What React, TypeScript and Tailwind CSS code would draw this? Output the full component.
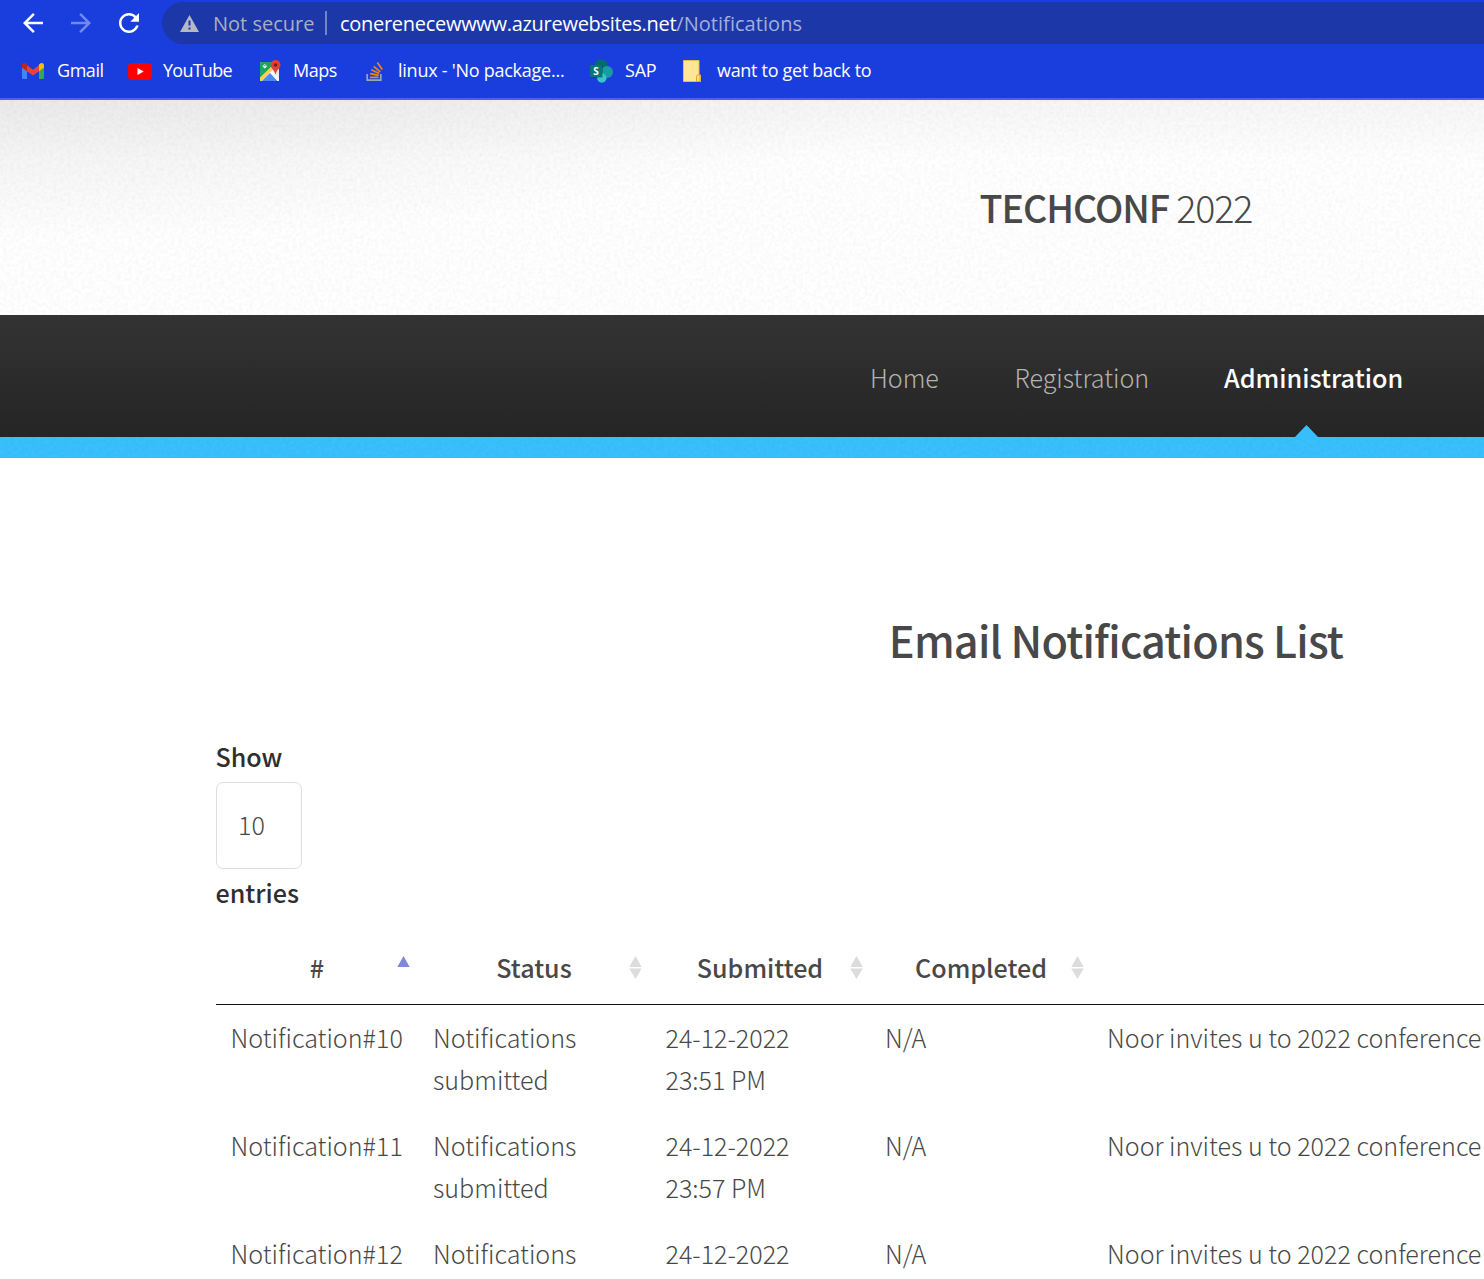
import React from "react";

const rows = [
  { id: "Notification#10", status: ["Notifications", "submitted"], submitted: ["24-12-2022", "23:51 PM"] },
  { id: "Notification#11", status: ["Notifications", "submitted"], submitted: ["24-12-2022", "23:57 PM"] },
  { id: "Notification#12", status: ["Notifications"], submitted: ["24-12-2022"] },
];

function GmailIcon() {
  return (
    <svg className="h-4 w-[22px]" viewBox="0 0 22 16" preserveAspectRatio="none">
      <path d="M0 3h5v13H1.5A1.5 1.5 0 0 1 0 14.5z" fill="#4285f4" />
      <path d="M17 3h5v11.500a1.500 1.500 0 0 1-1.500 1.500H17z" fill="#34a853" />
      <path d="M5 2.200l6 4.600 6-4.600v6L11 12.600 5 8.200z" fill="#ea4335" />
      <path d="M0 2.500C0 .2 2.500-.6 4.200.8L5 1.500v6.700L0 4.600z" fill="#c5221f" />
      <path d="M22 2.500c0-2.300-2.500-3.100-4.200-1.700l-.8.700v6.700l5-3.600z" fill="#fbbc04" />
    </svg>
  );
}

function YouTubeIcon() {
  return (
    <svg className="h-[17px] w-6" viewBox="0 0 24 17">
      <rect width="24" height="17" rx="4" fill="#f00" />
      <path d="M9.500 5v7l6.200-3.500z" fill="#fff" />
    </svg>
  );
}

function MapsIcon() {
  return (
    <svg className="h-[22px] w-[22px]" viewBox="0 0 22 22">
      <rect x="1" y="2" width="19" height="19" rx="1.500" fill="#e8eaed" />
      <path d="M1 3.500A1.500 1.500 0 0 1 2.500 2H18L1 19z" fill="#1da462" />
      <path d="M1 17.500L15 4l2 2.500L2.500 21H1z" fill="#ffd04b" />
      <path d="M3 21l8-8 7.500 8z" fill="#4a89f3" />
      <path d="M11 12.500l2-2 7 8V21h-1.500z" fill="#fff" />
      <path d="M8 6.200H5.700v1h1.200A1.500 1.500 0 1 1 6.500 5" fill="none" stroke="#fff" strokeWidth="1" />
      <path d="M16.500 0a5 5 0 0 1 5 5c0 3.500-4 4.500-4.700 9h-.6c-.7-4.500-4.700-5.500-4.700-9a5 5 0 0 1 5-5z" fill="#e53e33" />
      <circle cx="16.500" cy="5" r="1.800" fill="#7c1f17" />
    </svg>
  );
}

function StackOverflowIcon() {
  return (
    <svg className="h-[21px] w-[18px]" viewBox="0 0 18 21" fill="none">
      <path d="M1.200 13v6.200h13.600V13" stroke="#9da5b5" strokeWidth="1.700" />
      <path d="M4 16.300h8.500M4.200 12.600l8.400 1.700M5.300 8.800l7.900 3.600M7.700 5.300l6.600 5.500M11.300 1.500l5 7" stroke="#f48024" strokeWidth="1.700" />
    </svg>
  );
}

function SharePointIcon() {
  return (
    <svg className="h-6 w-[23px]" viewBox="0 0 23 24">
      <circle cx="11" cy="7" r="6.700" fill="#036c70" />
      <circle cx="17" cy="13" r="6" fill="#1a9ba1" />
      <circle cx="11.800" cy="19" r="4.700" fill="#37c6d0" />
      <rect x="1" y="6" width="12" height="13" rx="1" fill="#000" opacity=".2" />
      <rect y="6" width="12" height="12" rx="1" fill="#03787c" />
      <text x="6" y="15.500" textAnchor="middle" fontFamily="Open Sans, sans-serif" fontWeight="700" fontSize="10" fill="#fff">S</text>
    </svg>
  );
}

function FolderIcon() {
  return (
    <svg className="h-[22px] w-[18px]" viewBox="0 0 18 22">
      <path d="M.5.500h15.500v14.500h1.500v6.500H.5z" fill="#ffe694" stroke="#e6be4a" />
      <path d="M13.500 21.500V16.500a1.500 1.500 0 0 1 1.500-1.500h2v5.500a1 1 0 0 1-1 1z" fill="#ffdf75" stroke="#d9a92c" />
    </svg>
  );
}

const bookmarks = [
  { label: "Gmail", icon: <GmailIcon />, item: "w-[106px] tracking-[-0.45px]", slot: "w-[34px]" },
  { label: "YouTube", icon: <YouTubeIcon />, item: "w-[131px] tracking-[-0.75px]", slot: "w-[34px]" },
  { label: "Maps", icon: <MapsIcon />, item: "w-[107px] tracking-[-0.5px]", slot: "w-[33px]" },
  { label: "linux - 'No package...", icon: <StackOverflowIcon />, item: "w-[224px] tracking-[-0.25px]", slot: "w-[31px]" },
  { label: "SAP", icon: <SharePointIcon />, item: "w-[93px] tracking-[-0.2px]", slot: "w-[34px]" },
  { label: "want to get back to", icon: <FolderIcon />, item: "w-[200px] tracking-[-0.3px]", slot: "w-[33px]" },
];

function Browser() {
  return (
    <div className="h-[100px] border-b-2 border-[#4765e4] bg-[#1a3edd] font-['Open_Sans',sans-serif] font-normal">
      <div className="flex h-[46px] pt-0.5">
        <div className="flex h-[42px] w-[162px] shrink-0 items-center gap-[18px] pl-[18px]">
          <svg className="h-[30px] w-[30px]" viewBox="0 0 24 24" fill="#fff">
            <path d="M20 11H7.830l5.590-5.590L12 4l-8 8 8 8 1.410-1.410L7.830 13H20z" />
          </svg>
          <svg className="h-[30px] w-[30px] rotate-180" viewBox="0 0 24 24" fill="#7389eb">
            <path d="M20 11H7.830l5.590-5.590L12 4l-8 8 8 8 1.410-1.410L7.830 13H20z" />
          </svg>
          <svg className="h-[30px] w-[30px]" viewBox="0 0 24 24" fill="#fff">
            <path d="M17.650 6.350C16.200 4.900 14.210 4 12 4c-4.420 0-7.990 3.580-7.990 8s3.570 8 7.990 8c3.730 0 6.840-2.550 7.730-6h-2.080c-.82 2.330-3.040 4-5.650 4-3.310 0-6-2.690-6-6s2.690-6 6-6c1.660 0 3.140.69 4.220 1.780L13 11h7V4l-2.350 2.350z" />
          </svg>
        </div>
        <div className="flex h-[42px] flex-1 items-center rounded-l-full bg-[#1c37a8] pl-[18px] text-[20px] leading-none">
          <svg className="mt-px h-[17px] w-[19px]" viewBox="0 0 19 17">
            <path d="M9.500 0L19 17H0z" fill="#b5b9c3" />
            <path d="M8.500 5.500h2v5h-2zM8.500 12.500h2v2h-2z" fill="#1c37a8" />
          </svg>
          <span className="ml-3.5 mt-0.5 w-[113px] text-[#a9afc1]">Not secure</span>
          <span className="h-6 w-0.5 -translate-x-px bg-[#7184cc]" />
          <span className="ml-[12px] mt-0.5 tracking-[-0.29px] text-white">
            conerenecewwww.azurewebsites.net
            <span className="tracking-[0.05px] text-[#a4afdc]">/Notifications</span>
          </span>
        </div>
      </div>
      <div className="flex h-[50px] items-center pl-[22px] text-[18px] leading-none text-white">
        {bookmarks.map((b) => (
          <div key={b.label} className={`flex shrink-0 items-center ${b.item}`}>
            <span className={`shrink-0 ${b.slot}`}>{b.icon}</span>
            <span className="-mt-[3px] whitespace-nowrap pl-px">{b.label}</span>
          </div>
        ))}
      </div>
    </div>
  );
}

function Grain({ strength }: { strength: string }) {
  return (
    <svg className="pointer-events-none absolute inset-0 h-full w-full" aria-hidden>
      <filter id={`grain${strength}`} x="0" y="0" width="100%" height="100%" colorInterpolationFilters="sRGB">
        <feTurbulence type="fractalNoise" baseFrequency="0.28" numOctaves="2" seed="4" />
        <feColorMatrix values={`0 0 0 0 0  0 0 0 0 0  0 0 0 0 0  ${strength} 0 0 0 -0.02`} />
      </filter>
      <rect width="100%" height="100%" filter={`url(#grain${strength})`} />
    </svg>
  );
}

function SortIcon({ active = false }: { active?: boolean }) {
  return (
    <svg className="absolute right-2 top-[24px] h-6 w-[13px]" viewBox="0 0 13 24">
      <path d="M6.500 0l6.200 11H.3z" fill={active ? "#8087e0" : "#dcdcdc"} />
      {!active && <path d="M6.500 23l6.200-10.500H.3z" fill="#dcdcdc" />}
    </svg>
  );
}

export default function App() {
  return (
    <div className="h-[1279px] w-full overflow-hidden bg-white font-['Noto_Sans_CJK_SC',sans-serif] text-[25.080px] font-light leading-[42px] text-[#484848]">
      <Browser />
      <div className="w-[2232px]">
        <header className="relative h-[215px] bg-white bg-[radial-gradient(ellipse_900px_140px_at_0_0,rgba(0,0,0,0.05),rgba(0,0,0,0.035)_45%,transparent),linear-gradient(to_bottom,rgba(0,0,0,0.035),transparent_60px)]">
          <Grain strength="0.06" />
          <h1 className="relative pt-[85px] text-center text-[37.6px] leading-[44px] tracking-[-1.050px]">
            <strong className="font-medium">TECHCONF</strong> 2022
          </h1>
        </header>
        <nav className="relative flex h-[122px] bg-linear-to-b from-[#333] to-[#252525] pl-[870px] pt-[41px] text-[#b3b3b3]">
          <a className="w-[144.500px]">Home</a>
          <a className="w-[209.500px]">Registration</a>
          <a className="text-[25.200px] font-medium text-white">Administration</a>
          <span className="absolute bottom-0 left-[1295px] h-[12px] w-[23px] bg-[#37bffb] [clip-path:polygon(50%_0,100%_100%,0_100%)]" />
        </nav>
        <div className="relative h-[21px] bg-[#39c0ff]">
          <Grain strength="0.065" />
        </div>
        <main className="px-[216px]">
          <h2 className="pt-[153px] text-center text-[43.2px] font-medium leading-[56px] tracking-[-0.8px]">
            Email Notifications List
          </h2>
          <div className="-ml-[0.500px] mt-[68px] font-medium text-[#2e2e2e]">Show</div>
          <div className="mt-[5px] flex h-[87px] w-[86px] items-center rounded-[7px] border border-[#dedede] pb-1 pl-[21px]">
            10
          </div>
          <div className="-ml-[0.500px] mt-0.5 font-medium text-[#2e2e2e]">entries</div>
          <div className="mt-[19px] grid h-[73px] grid-cols-[202px_232px_221px_221px_1fr] border-b border-[#111] text-center font-medium">
            <div className="relative pt-[14px]">#<SortIcon active /></div>
            <div className="relative pt-[14px]">Status<SortIcon /></div>
            <div className="relative pr-px pt-[14px]">Submitted<SortIcon /></div>
            <div className="relative pr-px pt-[14px]">Completed<SortIcon /></div>
          </div>
          {rows.map((r) => (
            <div key={r.id} className="grid h-[108px] grid-cols-[202px_232px_220px_222px_1fr] pt-[11px]">
              <div className="pl-[14.500px]">{r.id}</div>
              <div className="pl-[15px]">{r.status.map((line) => <div key={line}>{line}</div>)}</div>
              <div className="pl-[15.500px]">{r.submitted.map((line) => <div key={line}>{line}</div>)}</div>
              <div className="pl-[15px]">N/A</div>
              <div className="whitespace-nowrap pl-[15px]">Noor invites u to 2022 conference</div>
            </div>
          ))}
        </main>
      </div>
    </div>
  );
}
